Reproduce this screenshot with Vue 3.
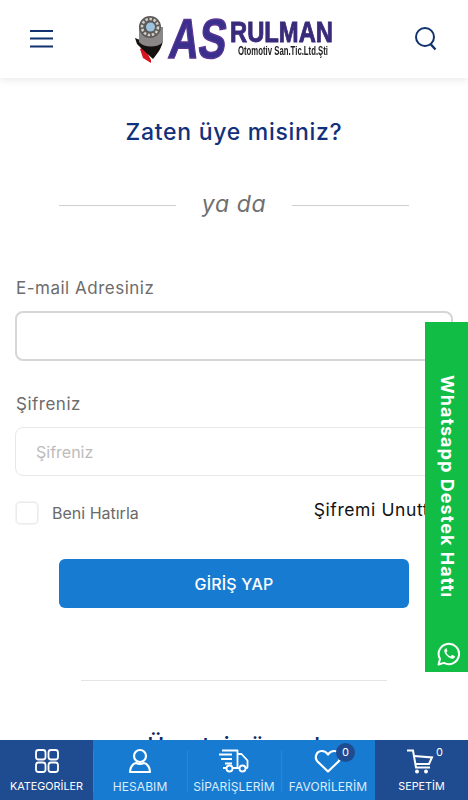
<template>
  <div class="page">
    <header class="topbar">
      <button class="icon-btn" aria-label="Menü">
        <svg width="23" height="18" viewBox="0 0 23 18" fill="none" stroke="#12316f" stroke-width="1.800">
          <path d="M0 1h23M0 8.500h23M0 16.500h23" />
        </svg>
      </button>
      <svg class="logo" width="198" height="46" viewBox="0 0 198 46">
        <path d="M5 32l4-2 7 13 0 3-8-5z" fill="#d8141f" />
        <path d="M0 21l5 2c6 6 16 6 23-1 0 7-5 14-10 20L7 32 2 27z" fill="#15110f" />
        <path d="M4 10v15c5 6 19 6 24 0V10z" fill="#8a8886" />
        <circle cx="15" cy="10" r="11" fill="#5c5a58" />
        <circle cx="15" cy="10" r="8" fill="none" stroke="#d2cfc9" stroke-width="2.600" stroke-dasharray="2.500 1.600" />
        <circle cx="15.500" cy="10" r="4.500" fill="#9cc3df" />
        <text class="logo-as" x="32" y="41" textLength="57" lengthAdjust="spacingAndGlyphs" transform="translate(6 0) skewX(-8)">AS</text>
        <text class="logo-rulman" x="95" y="24.500" textLength="103" lengthAdjust="spacingAndGlyphs">RULMAN</text>
        <text class="logo-sub" x="103" y="37.500" textLength="90" lengthAdjust="spacingAndGlyphs">Otomotiv San.Tic.Ltd.Şti</text>
      </svg>
      <button class="icon-btn" aria-label="Ara">
        <svg width="22" height="24" viewBox="0 0 22 24" fill="none" stroke="#12316f" stroke-width="2">
          <circle cx="10" cy="10" r="9" />
          <path d="M15.500 17l5 5.500" stroke-width="2.400" />
        </svg>
      </button>
    </header>

    <main class="content">
      <h2 class="title">Zaten üye misiniz?</h2>

      <div class="or-row">
        <span class="or-line"></span>
        <span class="or-text">ya da</span>
        <span class="or-line"></span>
      </div>

      <form class="form" @submit.prevent>
        <label class="label">E-mail Adresiniz</label>
        <input class="input input-focus" type="text" />

        <label class="label label-pass">Şifreniz</label>
        <input class="input input-pass" type="password" placeholder="Şifreniz" />

        <div class="options">
          <label class="remember">
            <span class="check"></span>
            <span>Beni Hatırla</span>
          </label>
          <a class="forgot">Şifremi Unuttum</a>
        </div>

        <button class="submit">GİRİŞ YAP</button>
      </form>

      <hr class="divider" />

      <h2 class="register">Ücretsiz üye ol</h2>
    </main>

    <a class="whatsapp">
      <span class="whatsapp-text">Whatsapp Destek Hattı</span>
      <svg class="whatsapp-icon" width="24" height="24" viewBox="0 0 24 24" fill="none">
        <path d="M1.500 22.500l1.500-5.500a10.200 10.200 0 1 1 4 3.900z" stroke="#fff" stroke-width="2" stroke-linejoin="round" />
        <path d="M8.800 6.800c-.6 0-1.500.8-1.500 2.300 0 1.700 1.200 3.400 2.900 5 1.800 1.700 3.700 2.700 5.200 2.700 1.500 0 2.500-1.100 2.500-2 0-.4 0-.6-.3-.8l-2.200-1c-.3-.1-.5 0-.7.200l-.8 1c-.2.200-.4.200-.6.100-1.700-.7-3-2-3.800-3.600-.1-.2 0-.4.100-.6l.7-.8c.2-.2.200-.4.100-.6l-.9-2.100c-.2-.4-.3-.5-.6-.5z" fill="#fff" />
      </svg>
    </a>

    <nav class="bottom-nav">
      <a v-for="item in navItems" :key="item.label" class="nav-item" :class="{ dark: item.dark }">
        <span class="nav-icon">
          <svg v-if="item.icon === 'grid'" width="26" height="26" viewBox="0 0 26 26" fill="none" stroke="#fff" stroke-width="1.800">
            <rect x="2" y="2" width="9.500" height="9.500" rx="2.500" />
            <rect x="14.500" y="2" width="9.500" height="9.500" rx="2.500" />
            <rect x="2" y="14.500" width="9.500" height="9.500" rx="2.500" />
            <rect x="14.500" y="14.500" width="9.500" height="9.500" rx="2.500" />
          </svg>
          <svg v-else-if="item.icon === 'user'" width="26" height="26" viewBox="0 0 26 26" fill="none" stroke="#fff" stroke-width="2.200">
            <circle cx="13" cy="8" r="6" />
            <path d="M3 24c0-5 3-8.500 6-9 2.500 1.200 5.500 1.200 8 0 3 .5 6 4 6 9z" stroke-linejoin="round" />
          </svg>
          <svg v-else-if="item.icon === 'truck'" width="30" height="24" viewBox="0 0 30 24" fill="none" stroke="#fff" stroke-width="1.800">
            <path d="M3 1.500h15.500V19M18.500 5h4l6 6.500V18a1 1 0 0 1-1 1h-1M14 19h6.500M4 19h3.500" stroke-linejoin="round" />
            <path d="M0 5.500h13M2 10h11M6 14.500h7" />
            <circle cx="10.500" cy="19.500" r="3" />
            <circle cx="23.500" cy="19.500" r="3" />
          </svg>
          <svg v-else-if="item.icon === 'heart'" width="28" height="24" viewBox="0 0 28 24" fill="none" stroke="#fff" stroke-width="2.200">
            <path d="M14 22.500L3.500 12.500C.2 9 2 2.300 7.500 2c3-.2 5 1.300 6.500 3.500C15.500 3.300 17.500 1.800 20.500 2c5.500.3 7.300 7 4 10.500z" stroke-linejoin="round" />
          </svg>
          <svg v-else width="29" height="26" viewBox="0 0 29 26" fill="none" stroke="#fff" stroke-width="2">
            <path d="M0 2.500h6l3 17h14" />
            <path d="M7 8l18 1.500-3 6.500H8.500" />
            <circle cx="10" cy="23.500" r="2" fill="#fff" stroke="none" />
            <circle cx="19" cy="23.500" r="2" fill="#fff" stroke="none" />
          </svg>
          <span v-if="item.badge === 'circle'" class="badge-circle">0</span>
          <span v-if="item.badge === 'plain'" class="badge-plain">0</span>
        </span>
        <span class="nav-label">{{ item.label }}</span>
      </a>
    </nav>
  </div>
</template>

<script setup>
const navItems = [
  { label: 'KATEGORİLER', icon: 'grid', dark: true },
  { label: 'HESABIM', icon: 'user' },
  { label: 'SİPARİŞLERİM', icon: 'truck' },
  { label: 'FAVORİLERİM', icon: 'heart', badge: 'circle' },
  { label: 'SEPETİM', icon: 'cart', dark: true, badge: 'plain' }
]
</script>

<style>
html,
body {
  margin: 0;
  height: 100%;
  overflow: hidden;
  background: #fff;
}
</style>

<style scoped>
.page {
  position: relative;
  height: 800px;
  overflow: hidden;
  font-family: "Inter", "Liberation Sans", sans-serif;
  background: #fff;
}

.topbar {
  height: 78px;
  padding: 0 31px 0 30px;
  box-sizing: border-box;
  display: flex;
  align-items: center;
  justify-content: space-between;
  background: #fff;
  box-shadow: 0 2px 8px rgba(0, 0, 0, 0.09);
}

.icon-btn {
  padding: 0;
  border: none;
  background: none;
  display: flex;
}

.logo {
  margin-top: 1px;
  overflow: visible;
  filter: blur(0.35px);
}

.logo text {
  font-family: "Liberation Sans", sans-serif;
  font-weight: 700;
}

.logo-as {
  font-size: 56px;
  fill: #3a2f8c;
  stroke: #5a3592;
  stroke-width: 1.500px;
}

.logo-rulman {
  font-size: 29px;
  fill: #3a2a7a;
  stroke: #3a2a7a;
  stroke-width: 0.9px;
}

.logo-sub {
  font-size: 12px;
  fill: #222;
}

.content {
  display: flex;
  flex-direction: column;
  align-items: center;
}

.title {
  margin: 39px 0 0;
  font-size: 23px;
  font-weight: 500;
  line-height: 30px;
  letter-spacing: 0.7px;
  color: #12317a;
}

.or-row {
  display: flex;
  align-items: center;
  gap: 26px;
  margin-top: 44px;
}

.or-line {
  width: 117px;
  height: 1px;
  background: #cfcfcf;
}

.or-text {
  margin-top: -2px;
  font-size: 23px;
  font-style: italic;
  line-height: 30px;
  letter-spacing: 0.6px;
  color: #6f6f6f;
}

.form {
  width: 100%;
  padding: 0 15px;
  margin-top: 56px;
  box-sizing: border-box;
  display: flex;
  flex-direction: column;
}

.label {
  padding-left: 1px;
  font-size: 17px;
  line-height: 26px;
  letter-spacing: 0.5px;
  color: #6c6c6c;
}

.label-pass {
  margin-top: 30px;
}

.input {
  height: 50px;
  margin-top: 10px;
  padding: 0 20px;
  box-sizing: border-box;
  border: 1px solid #e8e8e8;
  border-radius: 8px;
  outline: none;
  font-family: inherit;
  font-size: 16px;
  background: #fff;
}

.input-pass {
  height: 49px;
}

.input::placeholder {
  color: #bbb;
}

.input-focus {
  border: 2px solid #d6d6d6;
}

.options {
  display: flex;
  justify-content: space-between;
  align-items: flex-start;
  margin-top: 26px;
  padding-left: 1px;
  white-space: nowrap;
}

.remember {
  display: flex;
  align-items: center;
  gap: 14px;
  font-size: 16px;
  color: #6a6a6a;
}

.check {
  width: 22px;
  height: 22px;
  box-sizing: border-box;
  border: 1px solid #ebebeb;
  border-radius: 4px;
  box-shadow: 0 0 0 1px #f3f3f3;
}

.forgot {
  margin-right: -3px;
  margin-top: -5px;
  font-size: 17.500px;
  line-height: 26px;
  letter-spacing: 0.6px;
  color: #111;
}

.submit {
  width: 350px;
  height: 49px;
  margin: 35px auto 0;
  border: none;
  border-radius: 6px;
  font-family: inherit;
  font-size: 16px;
  font-weight: 500;
  letter-spacing: 0.2px;
  color: #fff;
  background: #177bd2;
}

.divider {
  width: 306px;
  height: 1px;
  margin: 72px 0 0;
  border: none;
  background: #e4e4e4;
}

.register {
  margin: 50px 0 0;
  font-size: 23px;
  font-weight: 500;
  line-height: 30px;
  letter-spacing: 0.7px;
  color: #0c2a66;
}

.whatsapp {
  position: absolute;
  top: 322px;
  right: 0;
  width: 43px;
  height: 350px;
  box-sizing: border-box;
  display: flex;
  flex-direction: column;
  align-items: center;
  padding: 53px 0 6px;
  background: #11bd45;
}

.whatsapp-text {
  writing-mode: vertical-rl;
  font-size: 18px;
  font-weight: 700;
  line-height: 20px;
  letter-spacing: 1.050px;
  white-space: nowrap;
  color: #fff;
}

.whatsapp-icon {
  margin-top: auto;
  margin-left: 5px;
}

.bottom-nav {
  position: absolute;
  left: 0;
  right: 0;
  bottom: 0;
  height: 60px;
  display: grid;
  grid-template-columns: 93px 94px 94px 94px 93px;
  background: #177bd2;
}

.nav-item {
  position: relative;
  display: flex;
  flex-direction: column;
  align-items: center;
  color: #dcecfa;
}

.nav-item.dark {
  background: #1f4b91;
  color: #fff;
}

.nav-item + .nav-item:not(.dark)::before {
  content: "";
  position: absolute;
  left: 0;
  top: 10px;
  bottom: 8px;
  width: 1px;
  background: #2a86d6;
}

.nav-icon {
  position: relative;
  height: 34px;
  margin-top: 4px;
  display: flex;
  align-items: center;
  justify-content: center;
}

.nav-label {
  margin-top: 1px;
  font-size: 12px;
  line-height: 16px;
  letter-spacing: 0.1px;
  white-space: nowrap;
}

.nav-item.dark .nav-label {
  font-size: 10.800px;
  letter-spacing: 0;
}

.badge-circle {
  position: absolute;
  top: -1px;
  right: -13px;
  width: 19px;
  height: 19px;
  border-radius: 50%;
  background: #1f4b91;
  font-size: 11px;
  line-height: 19px;
  text-align: center;
  color: #fff;
}

.badge-plain {
  position: absolute;
  top: 1px;
  right: -7px;
  font-size: 11px;
  line-height: 14px;
  color: #fff;
}
</style>
